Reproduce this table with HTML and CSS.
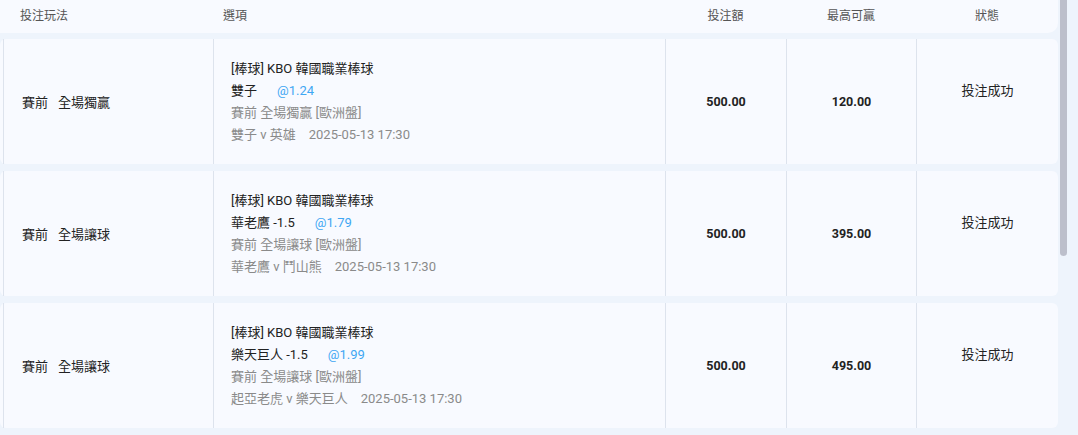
FILE: index.html
```html
<!DOCTYPE html>
<html lang="zh-Hant">
<head>
<meta charset="utf-8">
<link rel="stylesheet" href="styles.css">
</head>
<body>
<div class="page">
  <div class="list">
    <div class="head">
      <div class="c c1 h">投注玩法</div>
      <div class="c c2 h">選項</div>
      <div class="c c3 h">投注額</div>
      <div class="c c4 h">最高可贏</div>
      <div class="c c5 h">狀態</div>
    </div>

    <div class="row">
      <div class="c c1 cell"><span>賽前</span><span class="sp">全場獨贏</span></div>
      <div class="c c2 cell opt">
        <div class="ln">[棒球] KBO 韓國職業棒球</div>
        <div class="ln">雙子<span class="odds">@1.24</span></div>
        <div class="ln grey">賽前 全場獨贏 [歐洲盤]</div>
        <div class="ln grey">雙子 v 英雄<span class="date">2025-05-13 17:30</span></div>
      </div>
      <div class="c c3 cell num">500.00</div>
      <div class="c c4 cell num">120.00</div>
      <div class="c c5 cell st">投注成功</div>
    </div>

    <div class="row">
      <div class="c c1 cell"><span>賽前</span><span class="sp">全場讓球</span></div>
      <div class="c c2 cell opt">
        <div class="ln">[棒球] KBO 韓國職業棒球</div>
        <div class="ln">華老鷹 -1.5<span class="odds">@1.79</span></div>
        <div class="ln grey">賽前 全場讓球 [歐洲盤]</div>
        <div class="ln grey">華老鷹 v 鬥山熊<span class="date">2025-05-13 17:30</span></div>
      </div>
      <div class="c c3 cell num">500.00</div>
      <div class="c c4 cell num">395.00</div>
      <div class="c c5 cell st">投注成功</div>
    </div>

    <div class="row">
      <div class="c c1 cell"><span>賽前</span><span class="sp">全場讓球</span></div>
      <div class="c c2 cell opt">
        <div class="ln">[棒球] KBO 韓國職業棒球</div>
        <div class="ln">樂天巨人 -1.5<span class="odds">@1.99</span></div>
        <div class="ln grey">賽前 全場讓球 [歐洲盤]</div>
        <div class="ln grey">起亞老虎 v 樂天巨人<span class="date">2025-05-13 17:30</span></div>
      </div>
      <div class="c c3 cell num">500.00</div>
      <div class="c c4 cell num">495.00</div>
      <div class="c c5 cell st">投注成功</div>
    </div>
  </div>
  <div class="scrollbar"><div class="thumb"></div></div>
</div>
</body>
</html>
```

FILE: styles.css
```css
html, body {
  margin: 0;
  padding: 0;
  background: #eef4fc;
  overflow: hidden;
}
body {
  font-family: Roboto, "Noto Sans CJK TC", sans-serif;
  font-size: 13px;
  color: #222;
}
.page {
  display: flex;
  height: 435px;
  gap: 2px;
}
.scrollbar {
  width: 7px;
  flex: none;
}
.thumb {
  height: 256px;
  background: #bcbfcb;
  border-radius: 0 0 4px 4px;
}
.list {
  width: 1058px;
  flex: none;
  display: flex;
  flex-direction: column;
  gap: 7px;
}
.head {
  display: flex;
  height: 33px;
  background: #f8faff;
  border-radius: 0 0 10px 0;
  padding-left: 3px;
  margin-bottom: -1px;
  align-items: center;
}
.row {
  display: flex;
  height: 125px;
  flex: none;
  background: #f8faff;
  border-radius: 6px;
  padding-left: 3px;
}
.c {
  box-sizing: border-box;
  flex: none;
}
.c1 { width: 210px; }
.c2 { width: 452px; }
.c3 { width: 121px; }
.c4 { width: 130px; }
.c5 { flex: 1; }

.h {
  font-size: 12px;
  color: #555;
  line-height: 33px;
}
.h.c1 { padding-left: 17px; }
.h.c2 { padding-left: 10px; }
.h.c3, .h.c4, .h.c5 { text-align: center; }

.cell {
  border-left: 1px solid #dde3ed;
  display: flex;
  align-items: center;
}
.cell.c1 { padding-left: 18px; }
.sp { margin-left: 10px; }
.opt {
  flex-direction: column;
  align-items: flex-start;
  justify-content: center;
  padding-left: 17px;
}
.ln { line-height: 22px; white-space: nowrap; }
.grey { color: #8a8a8a; }
.odds { color: #3fa7f3; margin-left: 20px; }
.date { margin-left: 13px; }
.num {
  justify-content: center;
  font-weight: 700;
  font-size: 12.5px;
}
.st {
  justify-content: center;
  padding-bottom: 24px;
}
```
